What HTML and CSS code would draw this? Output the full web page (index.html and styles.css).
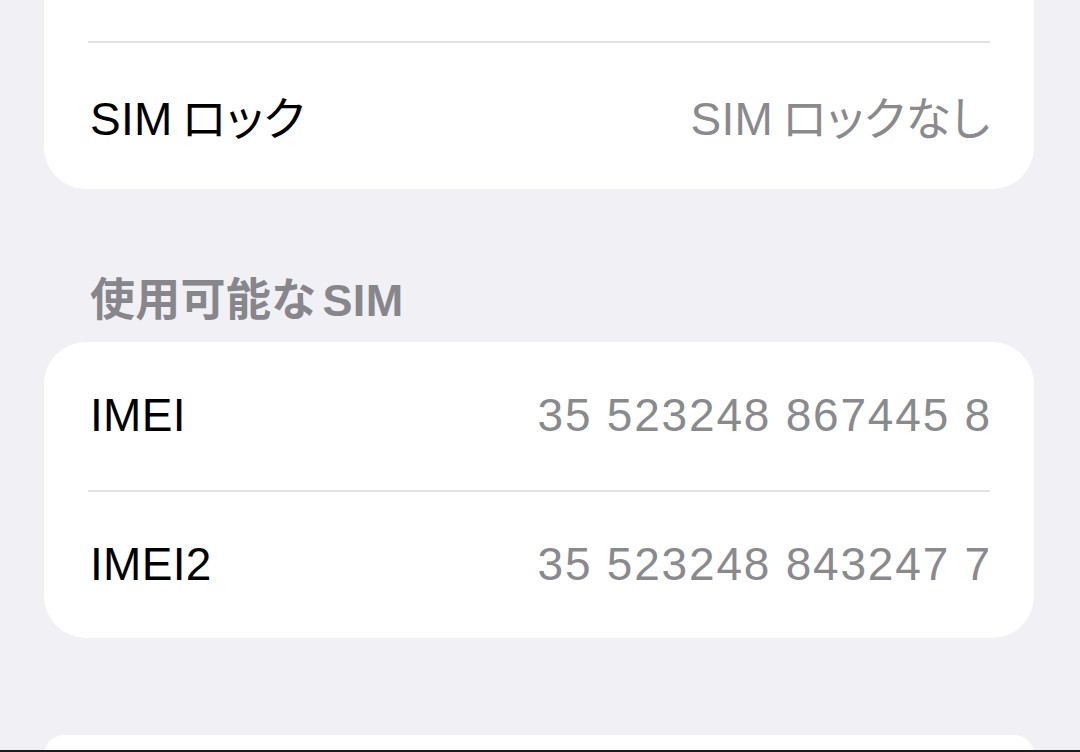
FILE: index.html
```html
<!DOCTYPE html>
<html lang="ja">
<head>
<meta charset="utf-8">
<link rel="stylesheet" href="styles.css">
</head>
<body>
<main class="page">
  <section class="card card-top">
    <div class="row"><span class="label"></span><span class="value"></span></div>
    <div class="row"><span class="label">SIM<span class="kana">ロック</span></span><span class="value">SIM<span class="kana">ロックなし</span></span></div>
  </section>
  <h2 class="section-title">使用可能な<span class="latin">SIM</span></h2>
  <section class="card">
    <div class="row"><span class="label">IMEI</span><span class="value num">35 523248 867445 8</span></div>
    <div class="row"><span class="label">IMEI2</span><span class="value num">35 523248 843247 7</span></div>
  </section>
  <section class="card card-next"></section>
</main>
<div class="edge"></div>
</body>
</html>
```
FILE: styles.css
```css
html, body {
  margin: 0;
  padding: 0;
  height: 752px;
  overflow: hidden;
  background: #f1f0f5;
}
body {
  font-family: "Liberation Sans", "Noto Sans CJK JP", sans-serif;
  color: #000;
  display: flex;
  flex-direction: column;
}
.page {
  flex: 1;
  min-height: 0;
  display: flex;
  flex-direction: column;
  padding: 0 46px 0 44px;
  overflow: hidden;
}
.page > * {
  flex-shrink: 0;
}
.card {
  background: #fff;
  border-radius: 42px;
  padding-left: 44px;
}
.card-top {
  margin-top: -107px;
}
.row {
  height: 148px;
  display: flex;
  align-items: center;
  justify-content: space-between;
  margin-right: 44px;
  font-size: 46px;
  letter-spacing: 0.3px;
  font-feature-settings: "palt";
  padding-bottom: 2px;
  box-sizing: border-box;
}
.row + .row {
  border-top: 2px solid #e3e3e7;
}
.label {
  padding-left: 2px;
}
.value {
  color: #8a8a8e;
}
.kana {
  padding-left: 9px;
}
.num {
  letter-spacing: 1.8px;
  margin-right: -2px;
}
.section-title {
  margin: 0;
  padding: 90px 0 0 46px;
  height: 63px;
  font-size: 45px;
  font-weight: 600;
  color: #86868b;
  line-height: 44px;
  letter-spacing: 0.3px;
}
.latin {
  padding-left: 6px;
}
.card-next {
  margin-top: 97px;
  height: 40px;
}
.edge {
  height: 2px;
  background: #1c1c1e;
  flex-shrink: 0;
}
```
